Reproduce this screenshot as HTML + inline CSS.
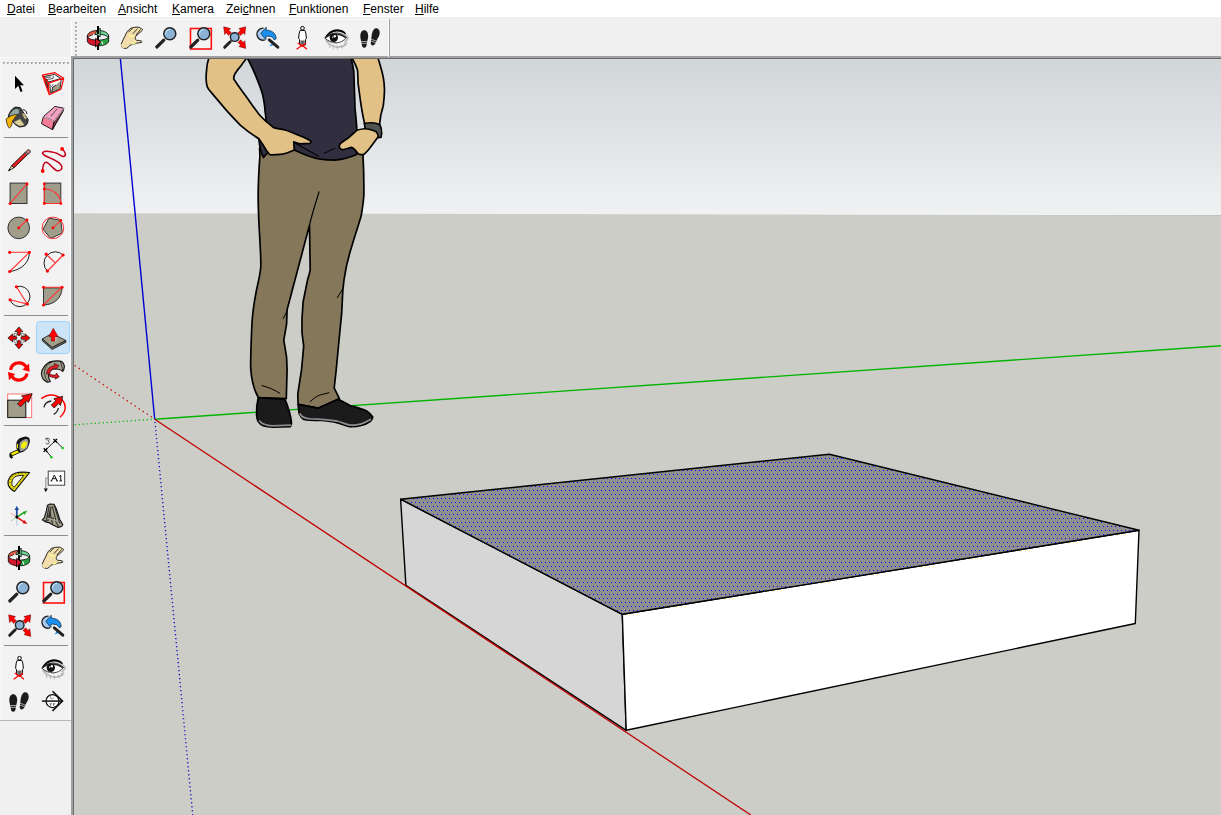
<!DOCTYPE html>
<html><head><meta charset="utf-8">
<style>
html,body{margin:0;padding:0;}
body{width:1221px;height:815px;overflow:hidden;background:#f0f0f0;position:relative;font-family:"Liberation Sans",sans-serif;}
#menu{position:absolute;left:0;top:0;width:1221px;height:17px;background:#fff;}
#menu span{position:absolute;top:2px;font-size:12px;line-height:14px;color:#000;white-space:nowrap;}
#menu u{text-decoration:underline;text-decoration-thickness:1px;text-underline-offset:1px;}
#ttb{position:absolute;left:71px;top:19px;width:317px;height:36px;background:#f2f2f2;border-top:1px solid #f8faff;border-left:1px solid #f8faff;}
#ttb .edge{position:absolute;left:316px;top:-1px;width:1px;height:38px;background:#a0a0a0;border-left:1px solid #fafafa;}
#ltb{position:absolute;left:0;top:57px;width:70px;height:663px;background:#f2f2f2;border-top:1px solid #f8faff;}
#ltb .bot{position:absolute;left:0;top:662px;width:71px;height:1px;background:#b9b9b9;}
#ltb .rgt{position:absolute;left:70px;top:0;width:1px;height:663px;background:#fbfbfb;}
.sep{position:absolute;left:4px;width:64px;height:1px;background:#8c8c8c;}
#vp{position:absolute;left:71px;top:56px;width:1150px;height:759px;background:#a0a0a0;}
svg{position:absolute;left:0;top:0;}
</style></head>
<body>
<div id="menu">
<span style="left:7px"><u>D</u>atei</span>
<span style="left:48px"><u>B</u>earbeiten</span>
<span style="left:118px"><u>A</u>nsicht</span>
<span style="left:172px"><u>K</u>amera</span>
<span style="left:226px">Zei<u>c</u>hnen</span>
<span style="left:289px"><u>F</u>unktionen</span>
<span style="left:363px"><u>F</u>enster</span>
<span style="left:415px"><u>H</u>ilfe</span>
</div>

<div id="vp"></div>

<svg id="scene" width="1221" height="815" viewBox="0 0 1221 815">
<defs>
<linearGradient id="sky" x1="0" y1="59" x2="0" y2="215" gradientUnits="userSpaceOnUse">
<stop offset="0" stop-color="#d1d6d9"/>
<stop offset="1" stop-color="#f0f1f2"/>
</linearGradient>
<pattern id="dots" x="0" y="0" width="4" height="8" patternUnits="userSpaceOnUse">
<rect x="0" y="0" width="4" height="8" fill="#8f8f8f"/>
<rect x="3" y="6" width="1" height="1" fill="#0000ff"/>
<rect x="1" y="2" width="1" height="1" fill="#0000ff"/>
</pattern>
<clipPath id="vpclip"><rect x="74" y="59" width="1147" height="756"/></clipPath>
</defs>
<rect x="71" y="56" width="1150" height="2" fill="#a0a0a0"/>
<rect x="71" y="56" width="2" height="759" fill="#a0a0a0"/>
<rect x="73" y="58" width="1148" height="1" fill="#696969"/>
<rect x="73" y="58" width="1" height="757" fill="#696969"/>
<g clip-path="url(#vpclip)">
<rect x="74" y="59" width="1147" height="156" fill="url(#sky)"/>
<polygon points="74,213.2 1221,215.3 1221,815 74,815" fill="#cdcdc8"/>
<!-- axes -->
<line x1="154.7" y1="419.2" x2="74" y2="365" stroke="#c80000" stroke-width="1.4" stroke-dasharray="1.2 3.62" stroke-dashoffset="-3.6"/>
<line x1="154.7" y1="419.2" x2="74" y2="424.8" stroke="#00b400" stroke-width="1.4" stroke-dasharray="1.1 2.91" stroke-dashoffset="-2.9"/>
<line x1="154.7" y1="419.2" x2="192.8" y2="815" stroke="#0000c8" stroke-width="1.4" stroke-dasharray="1.1 2.92" stroke-dashoffset="-2.9"/>
<line x1="154.7" y1="419.2" x2="120.4" y2="59" stroke="#0000d0" stroke-width="1.4"/>
<line x1="154.7" y1="419.2" x2="1221" y2="345.7" stroke="#00b400" stroke-width="1.4"/>
<!-- box -->
<g stroke="#000" stroke-width="1.4" stroke-linejoin="round">
<polygon points="400.6,499.2 622.3,614.3 626.2,730.3 405.9,585.4" fill="#d6d6d6"/>
<polygon points="622.3,614.3 1139,530.3 1135.3,623.5 626.2,730.3" fill="#ffffff"/>
<polygon points="400.6,499.2 829.4,454.2 1139,530.3 622.3,614.3" fill="url(#dots)"/>
</g>
<line x1="154.7" y1="419.2" x2="750.8" y2="815" stroke="#c00000" stroke-width="1.3"/>
<!-- person -->
<g id="person" stroke="#000" stroke-linejoin="round" stroke-linecap="round">
<!-- pants -->
<path d="M259.6,148 L259.9,156 C258.5,175 258,190 258.2,201.5 C258.5,220 259.5,232 259.9,241 C260.5,252 261,260 260.8,266.8 C260,276 258,283 256.5,290 C253.5,305 252,318 251.7,329 C251,345 250.5,358 250.7,368.4 C251.5,380 254,390 258.3,397.5 L286.3,398.6 L287.1,370 L286.6,357.3 L283.8,340.2 L286.6,324.2 L287.1,309.8 L309.5,225.1 L310.2,270.2 C309.5,274 308.5,277 307.5,280 L303.1,302 L302,318.6 L302,333 L303.7,346.2 L301.5,370 L297.8,393.9 L298.1,404.3 L318,408.2 L339.5,398.8 L334.2,388 L336.2,370 L339.5,335.2 L341.7,313.1 L342.8,291 L344,280 C346,265 349,255 351.8,246.2 C356,232 359,224 361.3,215.3 C363,205 364,198 363.9,193 C364,180 363.5,165 363,155.2 L362,148 Z" fill="#84775a" stroke-width="1.7"/>
<path d="M319,191.8 C316,202 312,214 309.5,225.1" fill="none" stroke-width="1.2"/>
<path d="M287.1,310.9 L283.2,318.6 M342.8,288.8 L337.3,297.7" fill="none" stroke-width="1"/>
<path d="M262.1,385.6 C268,387 275,390 279.8,393.3" fill="none" stroke-width="1"/>
<path d="M310.2,401.6 C314,398 318,395.5 320.2,395 L329,392.7" fill="none" stroke-width="1"/>
<!-- shoes -->
<path d="M258.3,397.7 C257,403 256.4,410 256.6,414.9 C256.8,418 257.5,420 258.3,421.5 C260,424 262,425.5 263.8,425.9 C267,426.8 270,427 272.6,427 L290.3,426.5 C291.3,425 291.5,424 291.4,422.6 C291,418 290,414 289.2,411.5 C287.8,407 286.5,402 284.8,399.4 Z" fill="#1b1b1b" stroke-width="1.8"/>
<path d="M259.5,421 C262,424.5 267,425.5 272.6,425.8 L290.6,425.2" fill="none" stroke="#8e8b90" stroke-width="1.8"/>
<path d="M298.1,404.3 C298.5,408 298.8,411 299.2,413.7 C300.5,416.5 302,418.5 303.6,419.3 C310,420.5 316,420.5 322.4,420.4 C328,421 332,421.5 336.8,422.6 C342,424 346,426 350,426.5 C354,426.8 358,426.2 361.1,425.4 C365,424.5 368,423 370,421.5 C371.5,420 372.5,418.5 372.7,417.1 C371,414.5 369,412.5 366.6,411 C361,408.5 355,407 350,405.5 C346,403.5 342,401 337.9,399.4 L318,408.2 Z" fill="#1b1b1b" stroke-width="1.8"/>
<path d="M300,414 C302,417.5 305,418.5 310,418.8 C318,419 328,419.5 336.8,421 C343,422.5 347,425 351,425.2 C357,425.5 364,423.5 370.5,419.5" fill="none" stroke="#8e8b90" stroke-width="1.8"/>
<!-- shirt -->
<path d="M246.5,50 L247.9,59 C251,65 254,71 256.4,77.4 C259,84 261.5,90 262.6,94.6 C264,101 264.8,106 265,110.5 L266.3,121.6 L262,132 L258.9,139.2 C259.5,146 260.5,152 263.5,157.5 L268.1,152.3 L280,140 L294.3,150 C299,152 304,154.5 309.4,156.2 C313,157.5 317,158.7 320.5,159.2 C325,159.8 330,160.2 335,160.1 C342,159.5 350,157.5 356.5,154.5 L356.9,130.2 C356.4,120 355.5,114 355,108.1 C354.8,100 354.6,95 354.4,89.7 C354.2,82 354,76 353.8,71.3 C353,66 352,62 351.3,59 L351,50 Z" fill="#312e3f" stroke-width="1.7"/>
<path d="M294.3,142.5 C302,147 310,151.5 318.6,156.2" fill="none" stroke-width="1.2"/>
<path d="M324.1,153.3 C328,151.5 331.5,150 335,148.3" fill="none" stroke-width="1"/>
<!-- left arm -->
<path d="M208,50 L208.6,59 C207.5,62 207,65 206.7,68.8 C206.3,72 206.1,75 206.1,78.6 C206.2,82 206.6,85 207.4,87.2 C208.5,89.5 209.8,91 211,92.1 C215,97 219.5,102 224.5,108.1 C229.5,114 235,119.5 240.5,125.3 C246,130 252,134.5 258.9,138.8 C260.5,141 262,143.5 263.5,145.7 C265,148.5 267,151.5 269,153.8 C269.8,154.5 270.5,154.9 271.4,154.9 C275,154.9 279,154.6 282.5,154.2 C286.5,153.2 290.5,151.8 294.3,150 C294.2,147 293.8,144 293.7,141.8 C296,142.6 298,143.4 300.2,143.8 C303.5,143.8 307,143.6 310,143.4 C310.8,142.8 311,141.8 310.7,141.1 C308,139.5 305,138 302.2,136.6 C297,134.5 291,132 285.9,130.2 C281,129.2 277,128.5 273.6,127.7 C271,125.5 268.5,123.5 266.3,121.6 C263.5,119 261,116.5 258.9,114.2 C255.5,109.5 252,105 249.1,100.7 C245,95 240.5,89 236.8,83.5 C235,81 233.8,79.5 233.7,78.6 C233.8,76.5 234.2,75 235,73.7 C236.8,71 238.5,68.5 240.5,66.4 C242.5,63.5 244.5,61 246,59 L248,50 Z" fill="#e2c186" stroke-width="1.7"/>
<!-- right arm -->
<path d="M352,50 L352.6,59 C354.5,62.5 356.2,66 357.5,70 C357.9,74 358,79 358.1,83.5 C359,90 359.8,96 360.6,102 C361.5,108 362.5,114 363.6,119.1 L364.8,124 L365.5,128.5 C362,129 359,129.5 356.9,130.2 C354,133 351,135.5 348.9,137.5 C345,140 342,142 340.3,143.7 C339.3,145 339.2,146.3 339.1,147.3 C340,148.8 341.5,149.6 342.8,149.8 C346,149 349,147.8 351.3,147.3 C353,148 354.2,149 355,149.8 C356.2,151.5 357.5,153 358.7,154.1 C360.5,154.6 362,154.8 363.6,154.7 C365.5,153 367,151.5 368.5,149.8 C372,145.5 375,141 377.7,137.5 L381.5,134 C381,128 380.2,126 379.6,124 C380,121 380.4,118 380.8,115.4 C381.8,111 382.7,108 383.3,105.6 C384,100 384.4,95 384.5,89.7 C384.3,85 384,81 383.3,77.4 C382,71 380.2,65 378.3,59 L377,50 Z" fill="#e2c186" stroke-width="1.7"/>
<path d="M364.2,123.6 C370,122.5 376,122.8 379.5,124.5 C381.5,127 382,132 381.2,137.2 L378.5,137.8 C378,134 376.5,131.5 374.7,131 C371,129.5 368,129 365.5,128.8 Z" fill="#4f5452" stroke-width="1.5"/>
</g>
</g>
</svg>

<div id="ttb"><div class="edge"></div></div>
<div id="ltb"><div class="rgt"></div><div style="position:absolute;left:0;top:0;width:1px;height:662px;background:#f4f7fc"></div><div class="bot"></div>
<div class="sep" style="top:79px"></div>
<div class="sep" style="top:257px"></div>
<div class="sep" style="top:367px"></div>
<div class="sep" style="top:477px"></div>
<div class="sep" style="top:587px"></div>
</div>
<svg id="icons" width="1221" height="815" viewBox="0 0 1221 815" style="position:absolute;left:0;top:0">
<defs>
<g id="i-orbit">
 <path d="M1.3,10.2 C1.6,6.8 5.5,4.8 11,4.5 L11,8.3 C7,8.5 3.8,9.3 2.6,10.8 Z" fill="#e25a48" stroke="#000" stroke-width="0.8"/>
 <path d="M22.7,10.2 C22.4,6.8 18.5,4.8 13,4.5 L13,8.3 C17,8.5 20.2,9.3 21.4,10.8 Z" fill="#6cd394" stroke="#000" stroke-width="0.8"/>
 <path d="M1.3,10.2 C1.8,12.6 5.5,13.8 10.6,14 L10.6,19.8 C5.5,19.5 1.6,17.6 1.3,15 Z" fill="#d4162c" stroke="#000" stroke-width="0.8"/>
 <path d="M22.7,10.2 C22.2,12.6 18.5,13.8 13.4,14 L13.4,19.8 C18.5,19.5 22.4,17.6 22.7,15 Z" fill="#27a23e" stroke="#000" stroke-width="0.8"/>
 <rect x="11" y="0" width="2" height="24" fill="#000"/>
 <path d="M9.6,12.2 L14.8,16.2 L9.4,21 Z" fill="#d4162c" stroke="#000" stroke-width="0.7" stroke-linejoin="round"/>
 <path d="M14.2,2 L9,7.5 L14.2,11 Z" fill="#6cd394" stroke="#000" stroke-width="0.7" stroke-linejoin="round"/>
 <path d="M15.6,15.5 L17,18.5 M8.2,7.8 L7,10" stroke="#fff" stroke-width="1.1"/>
 <rect x="11" y="0" width="2" height="8" fill="#000"/><rect x="11" y="20" width="2" height="4" fill="#000"/>
</g>
<g id="i-pan">
 <path d="M1.3,17.9 C1.5,20 1.8,21 2.4,21.6 C4,22.5 5.5,22.5 6.8,22.3 C8,21.5 9,20.2 10.1,19.3 C11.8,18.5 13.5,18.2 14.9,17.9 L16.8,17.1 C18.5,16.9 20,16.8 21.6,16.4 C22,16 21.8,15.2 21.2,14.9 C19.5,14.5 18,14.4 16.4,14.2 C15.8,13.8 15.3,13.3 15.3,12.7 C15.2,12 15.3,11.2 15.7,10.5 C16.6,9.5 17.6,8.5 18.6,7.6 C20,6.5 21.5,5.2 22.7,3.9 C22.5,3 21.3,2.3 20.1,2 L19.3,1.3 C17.8,1.1 16.2,1.1 14.6,1.3 C13,1.6 11.8,1.9 10.5,2.4 C9.2,3.3 8.1,4.5 7.2,5.7 C6.2,7.2 5.5,8.6 5,10.1 C3.6,12.7 2.3,15.3 1.3,17.9 Z" fill="#f2deaa" stroke="#111" stroke-width="0.9" stroke-linejoin="round"/>
 <path d="M1.5,18.2 C1.8,20.2 2.5,21.5 4,22" stroke="#f2deaa" stroke-width="1.4" fill="none"/>
 <path d="M8.6,6.2 L12.6,2.1 M12.8,7.8 L17.5,2.6 M15.8,9.2 L20.6,3.4" stroke="#222" stroke-width="0.9" fill="none"/>
 <path d="M8.5,9 C10,9.5 12,10 14,10.5 M11.8,18.2 C13,17.5 14.5,17.2 15.5,17.5" stroke="#f5f88a" stroke-width="1.6" fill="none" opacity="0.9"/>
</g>
<g id="i-zoom">
 <line x1="2.8" y1="21" x2="9.8" y2="14.2" stroke="#222" stroke-width="3.2" stroke-linecap="round"/>
 <circle cx="15.8" cy="7.7" r="6" fill="#8cb2d6" stroke="#222" stroke-width="1.5"/>
 <path d="M11.5,8.5 A4.5,4.5 0 0 1 16,3.3" stroke="#b8dcf8" stroke-width="1.2" fill="none"/>
</g>
<g id="i-zoomwin">
 <rect x="2.5" y="2.5" width="20.8" height="20.5" fill="none" stroke="#ff1010" stroke-width="1.6"/>
 <use href="#i-zoom"/>
</g>
<g id="i-zoomext">
 <line x1="2.7" y1="21.3" x2="8.2" y2="15.8" stroke="#222" stroke-width="3" stroke-linecap="round"/>
 <circle cx="12.7" cy="11.1" r="4.3" fill="#8cb2d6" stroke="#222" stroke-width="1.4"/>
 <path d="M1.7,0.8 L8.5,2.6 L6.8,4.2 L9.4,6.8 L6.8,9.4 L4.2,6.8 L2.6,8.5 Z" fill="#f00" stroke="#600" stroke-width="0.5"/>
 <path d="M23.7,0.8 L16.9,2.6 L18.6,4.2 L16,6.8 L18.6,9.4 L21.2,6.8 L22.8,8.5 Z" fill="#f00" stroke="#600" stroke-width="0.5"/>
 <path d="M23.7,22.4 L16.9,20.6 L18.6,19 L16,16.4 L18.6,13.8 L21.2,16.4 L22.8,14.7 Z" fill="#f00" stroke="#600" stroke-width="0.5"/>
</g>
<g id="i-prev">
 <path d="M7.5,2.2 A6,6 0 1 0 9,13.8" fill="#a8ccf0" stroke="#222" stroke-width="1.4"/>
 <path d="M4.8,7.4 L10.2,1.2 L10.4,4.2 C15,4.2 20,6.5 20.2,12.8 L18,13.8 C17,10.5 14,10 10.2,10.2 L9.8,13.6 Z" fill="#1a8ff0" stroke="#123" stroke-width="0.7" stroke-linejoin="round"/>
 <path d="M13.4,20.5 L16,17 L18,19 Z" fill="#1a8ff0"/>
 <line x1="13.3" y1="13.8" x2="21.8" y2="21.2" stroke="#222" stroke-width="3" stroke-linecap="round"/>
</g>
<g id="i-poscam">
 <circle cx="12.5" cy="2.2" r="1.8" fill="#fff" stroke="#000" stroke-width="1"/>
 <path d="M10.2,4.4 L14.8,4.4 C15.8,6 16.2,9 16.3,12.5 L15.5,13.5 L15.3,18.8 L13.5,19.4 L12.5,17 L11.5,19.4 L9.7,18.8 L9.5,13.5 L8.7,12.5 C8.8,9 9.2,6 10.2,4.4 Z" fill="#fff" stroke="#000" stroke-width="1" stroke-linejoin="round"/>
 <path d="M10.3,14.5 L14.7,14.5 L14.5,19 L10.5,19 Z" fill="#666"/>
 <path d="M6.6,23.2 L12.3,19.2 L16.9,23.2 M7.8,17 L12.3,20.3 L16,17" stroke="#f00" stroke-width="1.2" fill="none"/>
</g>
<g id="i-look">
 <path d="M2,15 C6,19.5 11,21.5 16,21 C19,20.5 21.5,19 23,16.5" stroke="#bbb" stroke-width="1.6" fill="none"/>
 <path d="M5,17.5 L6,22 M9,19 L9.5,23 M13,19.5 L13.5,23.5 M17,19 L18.5,22.5 M20,17 L22,20" stroke="#aaa" stroke-width="0.8" fill="none"/>
 <path d="M16,5.5 C19,6.5 22,8.5 24,12 C23,14 22,15 20.5,16" stroke="#b8b8b8" stroke-width="1.8" fill="none"/>
 <path d="M1,12.5 C4,8.5 8.5,6.8 13,7 C17,7.3 20,9 22.5,11.5 C19.5,15 16,16.8 12.5,16.8 C8,16.5 4.5,15 1,12.5 Z" fill="#fff" stroke="#333" stroke-width="0.9"/>
 <path d="M1,11.5 C3.5,6 9,3.2 13.5,3.3 C17.5,3.5 20.5,5 22,7.5 L21,8.3 C19,6.3 16,5.5 13,5.6 C8.5,5.8 4,8.5 1.6,12.6 Z" fill="#000"/>
 <path d="M1,12 C4,9.2 8,8 12,8 C16,8 19,9.5 22,11.8" stroke="#222" stroke-width="1.3" fill="none"/>
 <circle cx="9.8" cy="11.8" r="4.2" fill="#111"/>
 <circle cx="10.8" cy="10.3" r="1.2" fill="#fff"/>
 <circle cx="8.6" cy="11.2" r="0.6" fill="#fff"/>
 <path d="M2,14 C5,16 9,17 13,17" stroke="#777" stroke-width="0.8" fill="none"/>
</g>
<g id="i-walk">
 <path d="M6.2,4.3 C8.8,4.3 10.3,7 10.2,10.5 C10.1,13 9,15 8.8,17.5 C8.6,20.5 7.8,21.7 6.2,21.7 C4.6,21.7 3.9,20.5 3.7,17.5 C3.5,15 2.3,13 2.3,10.5 C2.3,7 3.6,4.3 6.2,4.3 Z" fill="#1c1c1c"/>
 <path d="M18.8,2.3 C21.3,2.8 22.2,5.5 21.5,8.5 C21,11 19.3,12.5 18.5,14.8 C17.6,17.8 16.3,19.7 14.5,19.4 C12.8,19 12.4,17.5 13,14.7 C13.5,12.2 13.4,10 14,7.5 C14.8,4 16.5,1.9 18.8,2.3 Z" fill="#1c1c1c"/>
 <path d="M3.5,15.5 L9.2,15.5 M3.6,17.3 L9,17.3 M13,13.2 L18.7,15.2 M12.7,15 L18,16.8" stroke="#ddd" stroke-width="0.7"/>
</g>
<g id="i-select">
 <path d="M8,3.8 L8,17 L11.3,13.8 L13.5,20 L15.5,19.3 L13.3,13.3 L17,13.2 Z" fill="#000"/>
</g>
<g id="i-component">
 <path d="M1.4,3.2 L13.8,0.7 L22.7,6.2 L20,17.2 L8.3,22.7 Z" fill="#fff"/>
 <polygon points="3,4.6 13.6,2.4 20,6.6 7.6,10" fill="#f4f4f4" stroke="#222" stroke-width="1"/>
 <polygon points="2.6,5.5 7,11.6 8.2,21 4.5,13" fill="#3a3a3a"/>
 <polygon points="11.5,15.5 19.8,8.8 18.8,16.8 9.8,20.8" fill="#a09e8a"/>
 <path d="M8.8,11.5 L9.6,21 L19,16.8 L20.2,8 M11.5,15.5 L11,20 M11.5,15.5 L15,13" stroke="#222" stroke-width="0.9" fill="none"/>
 <path d="M5,5.5 L10,5 M6,7.5 L12,6.5 L12.5,4 M12.5,12.5 L10.5,14 L12,16" stroke="#333" stroke-width="0.8" fill="none"/>
 <path d="M1.4,3.2 L13.8,0.7 L22.7,6.2 L20,17.2 L8.3,22.7 Z M1.4,3.2 L7.3,11.1 L22.7,6.2 M7.3,11.1 L8.3,22.7" fill="none" stroke="#f00" stroke-width="1.2" stroke-linejoin="round"/>
</g>
<g id="i-paint">
 <path d="M1.2,10.1 C3,5 6,1.5 9,1.1 L13.3,1.7 L21.2,13.7 C21,17 19.5,19.5 18,20 L12.8,21.1 C10,20 7.5,18 6,16.3 Z" fill="#444" stroke="#111" stroke-width="0.9"/>
 <path d="M2.5,9.5 C4,5.5 7,3 10,3 C12,3.2 12.5,5 11.8,7 C10,9.5 6,10.5 2.5,9.5 Z" fill="#8fa8a0"/>
 <path d="M7,16 L13,13 L17.5,19 L13,20 C11,19.5 9,18 7,16 Z" fill="#d8d098"/>
 <path d="M15,8 L17,7 L20,12 L18,13.5 Z" fill="#c0b080"/>
 <path d="M15.5,4 C17.5,3 19.5,5 20,8" stroke="#111" stroke-width="1" fill="none"/>
 <path d="M-0.9,13.2 C-0.5,17 0.8,20.5 2.3,22.1 C3.6,21.5 4.5,19.5 4.9,17.9 C5.3,15.8 5.5,14.5 6.5,13.7 C8,11.5 9.5,9.5 10.7,8.5 C7,8.5 4.5,9.5 2.8,10.6 C1.5,11.2 0,12 -0.9,13.2 Z" fill="#f5b400" stroke="#222" stroke-width="0.8"/>
</g>
<g id="i-eraser">
 <path d="M2.4,10.6 L13.9,0.4 L22.8,2.2 L13.1,15.3 Z" fill="#f4a0c4" stroke="#111" stroke-width="0.9" stroke-linejoin="round"/>
 <path d="M2.4,10.6 L13.1,15.3 L11.5,23.7 L0.5,17.7 Z" fill="#f27c98" stroke="#111" stroke-width="0.9" stroke-linejoin="round"/>
 <path d="M13.1,15.3 L22.8,2.2 L22,5.5 L11.5,23.7 Z" fill="#7a3a48" stroke="#111" stroke-width="0.9" stroke-linejoin="round"/>
 <path d="M2.4,10.6 L13.1,15.3 L22.8,2.2" stroke="#fde" stroke-width="0.8" fill="none"/>
 <path d="M10,10 L16,3" stroke="#553" stroke-width="1.2" stroke-dasharray="1 0.6"/>
</g>
<g id="i-pencil">
 <path d="M1.7,22.7 L4.73,17.5 L6.97,19.8 Z" fill="#e4e0a0" stroke="#111" stroke-width="0.8" stroke-linejoin="round"/>
 <path d="M1.7,22.7 L2.6,20.9 L3.5,21.8 Z" fill="#000" stroke="#000" stroke-width="0.6"/>
 <path d="M4.73,17.5 L17.91,4.66 L20.15,6.96 L6.97,19.8 Z" fill="#e81c1c" stroke="#111" stroke-width="0.9" stroke-linejoin="round"/>
 <path d="M17.91,4.66 L18.7,3.9 L20.94,6.2 L20.15,6.96 Z" fill="#fff" stroke="#111" stroke-width="0.6"/>
 <path d="M18.7,3.9 L20.3,2.3 C21,1.6 22.1,1.6 22.8,2.3 C23.5,3 23.5,4.1 22.8,4.8 L20.94,6.2 Z" fill="#d88484" stroke="#111" stroke-width="0.9"/>
</g>
<g id="i-freehand">
 <path d="M1.7,23 C1.5,18 3,14.3 5,14.3 C8,14.3 12,21 15.5,22.5 C18.5,23.5 21.5,21.5 20.8,18.5 C20,15 14,12 8,9.5 C3,7.5 0.5,5.5 2,4.2 C4,2.5 10,3.5 14.8,4.9 C18.5,6.3 20,8.7 22.5,8.5 C25,8 25.5,5 21.1,0.7" fill="none" stroke="#c4001c" stroke-width="1.5"/>
 <circle cx="1.7" cy="23" r="1.9" fill="#f00"/>
 <circle cx="21.1" cy="0.9" r="1.9" fill="#f00"/>
</g>
<g id="i-rect">
 <rect x="3.1" y="1.1" width="16.9" height="20.4" fill="#a09e8a" stroke="#333" stroke-width="1"/>
 <line x1="3.1" y1="21.5" x2="20" y2="1.9" stroke="#f33" stroke-width="1.1"/>
 <circle cx="3.1" cy="21.5" r="1.5" fill="#f00"/><circle cx="20" cy="1.9" r="1.5" fill="#f00"/>
</g>
<g id="i-rotrect">
 <rect x="3.3" y="1.1" width="16.5" height="20.4" fill="#a09e8a" stroke="#333" stroke-width="1"/>
 <path d="M3.3,1.9 L3.3,21.5 L19.8,21.5 M3.3,7 A16.5,14.5 0 0 1 19.8,21.5" fill="none" stroke="#f33" stroke-width="1.1"/>
 <circle cx="3.3" cy="1.9" r="1.4" fill="#f00"/><circle cx="3.3" cy="7" r="1.4" fill="#f00"/><circle cx="3.3" cy="21.5" r="1.4" fill="#f00"/><circle cx="19.8" cy="21.5" r="1.4" fill="#f00"/>
</g>
<g id="i-circle">
 <circle cx="11.7" cy="11.9" r="10.8" fill="#a09e8a" stroke="#333" stroke-width="1"/>
 <line x1="11.7" y1="11.9" x2="20" y2="4" stroke="#f33" stroke-width="1.1"/>
 <circle cx="11.7" cy="11.9" r="1.4" fill="#f00"/><circle cx="20" cy="4" r="1.4" fill="#f00"/>
</g>
<g id="i-polygon">
 <polygon points="19.8,4.4 21.3,17 9.6,22.5 2.1,13.1 8,2.1" fill="#a09e8a" stroke="#333" stroke-width="1"/>
 <circle cx="11.9" cy="11.9" r="10.8" fill="none" stroke="#f33" stroke-width="1"/>
 <line x1="11.9" y1="11.9" x2="19.8" y2="4.4" stroke="#f33" stroke-width="1.1"/>
 <circle cx="11.9" cy="11.9" r="1.4" fill="#f00"/><circle cx="19.8" cy="4.4" r="1.4" fill="#f00"/>
</g>
<g id="i-arc1">
 <path d="M22.4,2.3 C22.5,12 15,20 2.7,21.5" fill="none" stroke="#222" stroke-width="1"/>
 <path d="M2.7,2.3 L22.4,2.3 L2.7,21.5" fill="none" stroke="#f33" stroke-width="1.1"/>
 <circle cx="2.7" cy="2.3" r="1.6" fill="#f00"/><circle cx="22.4" cy="2.3" r="1.6" fill="#f00"/><circle cx="2.7" cy="21.5" r="1.6" fill="#f00"/>
</g>
<g id="i-arc2">
 <path d="M6.4,21.1 A11.2,11.2 0 1 1 22.1,5" fill="none" stroke="#222" stroke-width="1"/>
 <path d="M22.1,5 L6.4,21.1 M5.2,4.2 L14.3,12.9" fill="none" stroke="#f33" stroke-width="1.3"/>
 <circle cx="5.2" cy="4.2" r="1.6" fill="#f00"/><circle cx="22.1" cy="5" r="1.6" fill="#f00"/><circle cx="6.4" cy="21.1" r="1.6" fill="#f00"/>
</g>
<g id="i-arc3">
 <path d="M9.4,2.8 A10.2,10.2 0 1 1 3.1,15.8" fill="none" stroke="#222" stroke-width="1"/>
 <path d="M9.4,2.8 L20.4,20.1 L3.1,15.8" fill="none" stroke="#f33" stroke-width="1.1"/>
 <circle cx="9.4" cy="2.8" r="1.6" fill="#f00"/><circle cx="3.1" cy="15.8" r="1.6" fill="#f00"/><circle cx="20.4" cy="20.1" r="1.6" fill="#f00"/>
</g>
<g id="i-pie">
 <path d="M2.5,3.9 L21,3.9 C21,14 13,20.9 2.5,20.9 Z" fill="#a09e8a" stroke="#333" stroke-width="1"/>
 <path d="M2.5,3.2 L21,3.2 L2.5,20.9" fill="none" stroke="#f33" stroke-width="1.1"/>
 <circle cx="2.5" cy="3.2" r="1.5" fill="#f00"/><circle cx="21" cy="3.2" r="1.5" fill="#f00"/><circle cx="2.5" cy="20.9" r="1.5" fill="#f00"/>
</g>
<g id="i-move">
 <g fill="#f40000" stroke="#1a1a1a" stroke-width="0.75" stroke-linejoin="miter">
 <path d="M11.9,0.9 L15.9,5.7 L13.3,5.7 L13.3,9 Q11.95,10.3 10.6,9 L10.6,5.7 L7.9,5.7 Z"/>
 <path d="M11.9,22.9 L15.9,18.1 L13.3,18.1 L13.3,14.8 Q11.95,13.5 10.6,14.8 L10.6,18.1 L7.9,18.1 Z"/>
 <path d="M0.9,11.9 L5.9,7.8 L5.9,10.5 L9.3,10.5 Q10.6,11.9 9.3,13.3 L5.9,13.3 L5.9,16 Z"/>
 <path d="M22.9,11.9 L17.9,7.8 L17.9,10.5 L14.5,10.5 Q13.2,11.9 14.5,13.3 L17.9,13.3 L17.9,16 Z"/>
 </g>
 <g fill="#fff" stroke="#555" stroke-width="0.5">
 <rect x="7.3" y="7.4" width="2.4" height="2.4"/><rect x="14.2" y="7.4" width="2.4" height="2.4"/>
 <rect x="7.3" y="14" width="2.4" height="2.4"/><rect x="14.2" y="14" width="2.4" height="2.4"/>
 </g>
 <circle cx="11.95" cy="11.9" r="1.1" fill="#fff"/>
</g>
<g id="i-pushpull">
 <polygon points="1.3,12.9 11,7.5 24.9,14.5 11.1,21.5" fill="#a09e8a" stroke="#222" stroke-width="0.9" stroke-linejoin="round"/>
 <polygon points="1.3,12.9 11.1,21.5 24.9,14.5 24.9,16.3 11.1,23.5 1.3,14.7" fill="#6c6a5c" stroke="#222" stroke-width="0.9" stroke-linejoin="round"/>
 <path d="M12.3,2.3 L17,10.5 L14.3,10.5 L14.3,15 L10.3,15 L10.3,10.5 L7.9,10.5 Z" fill="#f00" stroke="#600" stroke-width="0.5"/>
 <path d="M14.8,11 L14.8,15.5" stroke="#ddd" stroke-width="1"/>
</g>
<g id="i-rotate">
 <path d="M3.5,9.8 C4.5,5 8,2.8 12.1,2.8 C15.5,2.8 18,4.5 19.5,7.5" fill="none" stroke="#f00" stroke-width="3.2"/>
 <path d="M22.6,11.8 L15.5,9.8 L22,3.5 Z" fill="#f00"/>
 <path d="M20,13.5 C19.5,17.5 16,20.2 12.1,20.2 C8.5,20.2 6,18.5 4.5,15.8" fill="none" stroke="#f00" stroke-width="3.2"/>
 <path d="M1,12 L8.2,14 L2,20.3 Z" fill="#f00"/>
</g>
<g id="i-followme">
 <path d="M0.4,13.8 C0.5,9 5,2.5 11.1,1.4 C14,0.8 17,0.8 19.3,1.1 C21.5,1.8 23,3.5 23.4,6.6 C23.2,9 22.5,10.5 21.7,11.4 C20,10.2 18.8,9.5 17.2,9.3 C15,9 13,9 11.7,9.3 C9.8,10 8.7,11 8.3,12.4 C7.8,14 7.5,15.5 7.6,17.2 C8,19 8.8,20.5 9.3,21.4 C8,22 7,22.3 5.9,22.1 C4,21.3 2.8,20 1.8,18.6 C1,17 0.5,15.5 0.4,13.8 Z" fill="#a09e8a" stroke="#111" stroke-width="1.1"/>
 <path d="M11,2 C7,3.5 4,7 3.5,11.5 C3.2,15 4.5,19 7,21.5" stroke="#222" stroke-width="0.8" fill="none"/>
 <path d="M19.5,1.5 C20.5,4 21.2,8 21.7,11.4" stroke="#222" stroke-width="0.8" fill="none"/>
 <path d="M5.6,14 C5.6,9.5 8.5,6.3 13.8,5.6 L13.2,3.6 L18,5.6 L14.6,9.4 L14.3,8.1 C11,8.5 9.2,10.7 8.6,14 Z" fill="#e41e26" stroke="#300" stroke-width="0.6" stroke-linejoin="round"/>
 <path d="M8.2,14 C10.5,15 12.5,15.3 14.8,15 L15.4,13 L18.3,16.8 L14.2,19.2 L14.3,17.6 C12,17.6 9.8,17 8.3,16.3 Z" fill="#e41e26" stroke="#300" stroke-width="0.6" stroke-linejoin="round"/>
</g>
<g id="i-scale">
 <rect x="0.7" y="0" width="24" height="23.5" fill="#fff" stroke="#f66" stroke-width="0.9"/>
 <rect x="0.7" y="6.2" width="18.1" height="17.3" fill="#a09e8a" stroke="#222" stroke-width="1.1"/>
 <path d="M25.1,-0.3 L21.5,8.5 L19.5,6.8 L13.5,12.8 L10.5,9.8 L16.5,3.8 L14.5,2 Z" fill="#f00" stroke="#111" stroke-width="0.8" stroke-linejoin="round"/>
</g>
<g id="i-offset">
 <path d="M0.3,4.6 C4,1.5 9,0.5 13,1.2 C20,2.5 24.5,8.5 24.2,14 C24,17.5 22,20.5 19,23.2" fill="none" stroke="#f00" stroke-width="1.4"/>
 <path d="M2.9,13.3 C3.5,10 6.5,7.5 10.3,7" fill="none" stroke="#222" stroke-width="1.3"/>
 <path d="M12.7,20.4 C15,19 17,16.5 17.4,14" fill="none" stroke="#222" stroke-width="1.3"/>
 <path d="M21.7,2.3 L19.5,11.5 L17.6,9.6 L13.2,14 L10.3,11.1 L14.7,6.7 L12.8,4.8 Z" fill="#f00" stroke="#111" stroke-width="0.8" stroke-linejoin="round"/>
</g>
<g id="i-tape">
 <path d="M3,17.2 L12,13.2 L13.2,16.2 L4.2,20.2 Z" fill="#f5ee00" stroke="#111" stroke-width="0.9"/>
 <path d="M2.3,18 L4.2,17.3 L6,21.8 L4.3,22.7 L2.5,21 Z" fill="#111"/>
 <path d="M9.3,6.9 C10,4.8 11,3.3 12.4,2.5 C14.5,1.3 16.5,0.6 18.6,0.4 C20,0.6 21.4,1.2 22.1,2.1 C22.8,3.6 23,5 22.7,6.6 C22.2,8.8 21.4,10.7 20.3,12.4 C18.5,14.3 16.5,15.8 14.2,16.6 C13,16.6 12,16.2 11.1,15.5 C10.2,14.3 9.6,13 9.3,11.7 Z" fill="#111"/>
 <path d="M12.8,6.6 C14.8,4.6 17,3.3 19.6,2.8 C20.6,3.3 21.2,4 21.4,4.9 C21.3,7.5 20.9,9.8 20,11.7 C18.2,13.6 16,14.9 13.5,15.5 C12.9,14.5 12.5,13.5 12.4,12.4 C12.4,10.4 12.5,8.5 12.8,6.6 Z" fill="#9c9c9c"/>
 <ellipse cx="17" cy="8.9" rx="2.5" ry="3.9" transform="rotate(28 17 8.9)" fill="#f5ee00"/>
 <path d="M10.8,8 C10.2,9.5 10.2,11 10.8,12.2" stroke="#f5ee00" stroke-width="1.2" fill="none"/>
</g>
<g id="i-dim">
 <path d="M4.5,14.1 L14.3,4.7 M14.3,4.7 L21.7,12.1 M4.5,14.1 L10.5,21" stroke="#000" stroke-width="0.9" fill="none"/>
 <path d="M2.7,12.3 L6.3,15.9 M2.7,15.9 L6.3,12.3 M12.5,2.9 L16.1,6.5 M12.5,6.5 L16.1,2.9" stroke="#000" stroke-width="1.3"/>
 <circle cx="21.7" cy="12.1" r="1.3" fill="#2c2"/>
 <circle cx="10.5" cy="21.2" r="1.3" fill="#2c2"/>
 <path d="M6,2.3 C7.5,1.8 9,2.8 8.2,4.2 C7.6,5 6.8,5 6.8,5 C8.3,5.3 8.8,7 7.5,7.8 C6.3,8.3 5,7.6 4.6,6.8 M4,3 L6.2,2.2 L5.8,4.3" stroke="#333" stroke-width="0.8" fill="none"/>
</g>
<g id="i-protractor">
 <path d="M1.1,14.1 C0.5,9 4,4.5 8,3.2 C12,2 17,2 22.6,2.5 L7.4,21.5 C4,19.5 1.5,17 1.1,14.1 Z" fill="#e8dc10" stroke="#111" stroke-width="1.2" stroke-linejoin="round"/>
 <path d="M4.8,13.6 C4.6,10 6.8,6.8 9.8,6 C12,5.4 14,5.3 16.8,5.4 L7.3,17.2 C5.8,16.2 4.9,15 4.8,13.6 Z" fill="#f2f2f2" stroke="#111" stroke-width="0.9"/>
 <path d="M2.5,12.5 L3.6,12.3 M3,9 L4.2,9.4 M5,6 L5.8,6.8 M8,4.2 L8.5,5.2 M11.5,3.3 L11.7,4.4 M15,3 L15,4.1 M18.5,3 L18.3,4 M20,5.5 L18.9,5.2 M17.5,8.5 L16.5,8.2 M14.5,12 L13.5,11.7 M11.5,15.8 L10.5,15.5 M3.5,16 L4.5,15.3 M6,18.8 L6.5,17.9" stroke="#222" stroke-width="0.7"/>
</g>
<g id="i-text">
 <rect x="7.2" y="1.1" width="16.5" height="14.1" fill="#fff" stroke="#333" stroke-width="0.9"/>
 <path d="M10.3,10.9 L13.3,5.2 L16.2,10.9 M11.6,8.7 L15,8.7 M9.6,10.9 L11.4,10.9 M15.2,10.9 L17,10.9 M18.3,6.5 L19.8,5.3 L19.8,10.9 M18.4,10.9 L21.1,10.9" stroke="#111" stroke-width="1" fill="none"/>
 <path d="M7.2,8.2 L4.8,8.2 L4.8,19" stroke="#999" stroke-width="1.2" fill="none"/>
 <path d="M2.8,18.5 L6.8,18.5 L4.8,22.3 Z" fill="#111"/>
</g>
<g id="i-axes">
 <line x1="9.8" y1="13.1" x2="9.8" y2="21.7" stroke="#c8d8e8" stroke-width="1.6"/>
 <line x1="9.8" y1="13.1" x2="3.1" y2="17.4" stroke="#6c6" stroke-width="1" stroke-dasharray="1 1"/>
 <line x1="9.8" y1="13.1" x2="3.1" y2="8.7" stroke="#e66" stroke-width="1" stroke-dasharray="1 1"/>
 <line x1="9.8" y1="13.1" x2="9.8" y2="5" stroke="#1c4c9c" stroke-width="1.8"/>
 <path d="M9.8,1.7 L12,6 L7.6,6 Z" fill="#1c4c9c"/>
 <line x1="9.8" y1="13.1" x2="17" y2="8.5" stroke="#2a2" stroke-width="1.5"/>
 <path d="M20.4,6.4 L17.5,11 L15.6,8 Z" fill="#2a2"/>
 <line x1="9.8" y1="13.1" x2="17" y2="17.8" stroke="#d11" stroke-width="1.5"/>
 <path d="M20.4,20.1 L15.6,19.2 L17.5,16 Z" fill="#d11"/>
 <circle cx="9.8" cy="13.1" r="1.5" fill="#000"/>
</g>
<g id="i-3dtext">
 <path d="M6.5,1.2 L8.8,0.1 L13,0.3 L15.2,4.5 L18.8,15.5 L21.8,20.6 L20.6,22.5 L17.2,23.4 L12.5,21.2 L10.2,20 L7.8,18.6 L4,17.6 L1.3,15.9 L3.2,13.8 L5.2,7.5 Z" fill="#a09e8a" stroke="#111" stroke-width="1.1" stroke-linejoin="round"/>
 <path d="M8.2,2 L5.5,15.5 M10,2.8 L8.2,13.5 M11.2,2.2 L14.8,15.8 M13.2,1.2 L18.8,19.5 M6,12.5 L13,14.5 M10.8,16 L11.5,21 M14.5,17 L17.5,22.5 M3.5,16.5 L8,16" stroke="#1a1a1a" stroke-width="0.9" fill="none"/>
 <path d="M9,5 L7.2,12 L10.5,12.8 Z" fill="#2a2a2a"/>
</g>
<g id="i-section">
 <circle cx="11.5" cy="11.1" r="6.5" fill="#fff" stroke="#111" stroke-width="1.2"/>
 <line x1="0.9" y1="11.1" x2="22" y2="11.1" stroke="#111" stroke-width="1.5"/>
 <path d="M11.5,1.2 L21.5,11.1 L11.5,20.9" fill="none" stroke="#111" stroke-width="1.6"/>
 <path d="M10,6 C9,6.5 9,8.5 10.5,8.8 C11.5,9 12.5,8.5 12.5,7.8 M9,13 L9.5,15.5 L10.5,13 M12.5,13 L12.5,15.5 L14,13" stroke="#333" stroke-width="0.6" fill="none"/>
</g>
</defs>
<rect x="36.5" y="321.5" width="33" height="32" rx="3" fill="#cce4f7" stroke="#99d1ff" stroke-width="1"/>
<rect x="75" y="22" width="2" height="2" fill="#a4a4a4"/><rect x="76" y="23" width="1" height="1" fill="#d0d0d0"/>
<rect x="75" y="26" width="2" height="2" fill="#a4a4a4"/><rect x="76" y="27" width="1" height="1" fill="#d0d0d0"/>
<rect x="75" y="30" width="2" height="2" fill="#a4a4a4"/><rect x="76" y="31" width="1" height="1" fill="#d0d0d0"/>
<rect x="75" y="34" width="2" height="2" fill="#a4a4a4"/><rect x="76" y="35" width="1" height="1" fill="#d0d0d0"/>
<rect x="75" y="38" width="2" height="2" fill="#a4a4a4"/><rect x="76" y="39" width="1" height="1" fill="#d0d0d0"/>
<rect x="75" y="42" width="2" height="2" fill="#a4a4a4"/><rect x="76" y="43" width="1" height="1" fill="#d0d0d0"/>
<rect x="75" y="46" width="2" height="2" fill="#a4a4a4"/><rect x="76" y="47" width="1" height="1" fill="#d0d0d0"/>
<rect x="75" y="50" width="2" height="2" fill="#a4a4a4"/><rect x="76" y="51" width="1" height="1" fill="#d0d0d0"/>
<rect x="75" y="54" width="2" height="2" fill="#a4a4a4"/><rect x="76" y="55" width="1" height="1" fill="#d0d0d0"/>
<rect x="3" y="62" width="2" height="2" fill="#a4a4a4"/><rect x="4" y="63" width="1" height="1" fill="#d0d0d0"/>
<rect x="7" y="62" width="2" height="2" fill="#a4a4a4"/><rect x="8" y="63" width="1" height="1" fill="#d0d0d0"/>
<rect x="11" y="62" width="2" height="2" fill="#a4a4a4"/><rect x="12" y="63" width="1" height="1" fill="#d0d0d0"/>
<rect x="15" y="62" width="2" height="2" fill="#a4a4a4"/><rect x="16" y="63" width="1" height="1" fill="#d0d0d0"/>
<rect x="19" y="62" width="2" height="2" fill="#a4a4a4"/><rect x="20" y="63" width="1" height="1" fill="#d0d0d0"/>
<rect x="23" y="62" width="2" height="2" fill="#a4a4a4"/><rect x="24" y="63" width="1" height="1" fill="#d0d0d0"/>
<rect x="27" y="62" width="2" height="2" fill="#a4a4a4"/><rect x="28" y="63" width="1" height="1" fill="#d0d0d0"/>
<rect x="31" y="62" width="2" height="2" fill="#a4a4a4"/><rect x="32" y="63" width="1" height="1" fill="#d0d0d0"/>
<rect x="35" y="62" width="2" height="2" fill="#a4a4a4"/><rect x="36" y="63" width="1" height="1" fill="#d0d0d0"/>
<rect x="39" y="62" width="2" height="2" fill="#a4a4a4"/><rect x="40" y="63" width="1" height="1" fill="#d0d0d0"/>
<rect x="43" y="62" width="2" height="2" fill="#a4a4a4"/><rect x="44" y="63" width="1" height="1" fill="#d0d0d0"/>
<rect x="47" y="62" width="2" height="2" fill="#a4a4a4"/><rect x="48" y="63" width="1" height="1" fill="#d0d0d0"/>
<rect x="51" y="62" width="2" height="2" fill="#a4a4a4"/><rect x="52" y="63" width="1" height="1" fill="#d0d0d0"/>
<rect x="55" y="62" width="2" height="2" fill="#a4a4a4"/><rect x="56" y="63" width="1" height="1" fill="#d0d0d0"/>
<rect x="59" y="62" width="2" height="2" fill="#a4a4a4"/><rect x="60" y="63" width="1" height="1" fill="#d0d0d0"/>
<rect x="63" y="62" width="2" height="2" fill="#a4a4a4"/><rect x="64" y="63" width="1" height="1" fill="#d0d0d0"/>
<rect x="67" y="62" width="2" height="2" fill="#a4a4a4"/><rect x="68" y="63" width="1" height="1" fill="#d0d0d0"/>
<use href="#i-orbit" transform="translate(86,26)"/>
<use href="#i-pan" transform="translate(120,26)"/>
<use href="#i-zoom" transform="translate(154,26)"/>
<use href="#i-zoomwin" transform="translate(188,26)"/>
<use href="#i-zoomext" transform="translate(222,26)"/>
<use href="#i-prev" transform="translate(256,26)"/>
<use href="#i-poscam" transform="translate(290,26)"/>
<use href="#i-look" transform="translate(324,26)"/>
<use href="#i-walk" transform="translate(358,26)"/>
<use href="#i-select" transform="translate(7,72)"/>
<use href="#i-component" transform="translate(41,72)"/>
<use href="#i-paint" transform="translate(7,106)"/>
<use href="#i-eraser" transform="translate(41,106)"/>
<use href="#i-pencil" transform="translate(7,148)"/>
<use href="#i-freehand" transform="translate(41,148)"/>
<use href="#i-rect" transform="translate(7,182)"/>
<use href="#i-rotrect" transform="translate(41,182)"/>
<use href="#i-circle" transform="translate(7,216)"/>
<use href="#i-polygon" transform="translate(41,216)"/>
<use href="#i-arc1" transform="translate(7,250)"/>
<use href="#i-arc2" transform="translate(41,250)"/>
<use href="#i-arc3" transform="translate(7,284)"/>
<use href="#i-pie" transform="translate(41,284)"/>
<use href="#i-move" transform="translate(7,326)"/>
<use href="#i-pushpull" transform="translate(41,326)"/>
<use href="#i-rotate" transform="translate(7,360)"/>
<use href="#i-followme" transform="translate(41,360)"/>
<use href="#i-scale" transform="translate(7,394)"/>
<use href="#i-offset" transform="translate(41,394)"/>
<use href="#i-tape" transform="translate(7,436)"/>
<use href="#i-dim" transform="translate(41,436)"/>
<use href="#i-protractor" transform="translate(7,470)"/>
<use href="#i-text" transform="translate(41,470)"/>
<use href="#i-axes" transform="translate(7,504)"/>
<use href="#i-3dtext" transform="translate(41,504)"/>
<use href="#i-orbit" transform="translate(7,546)"/>
<use href="#i-pan" transform="translate(41,546)"/>
<use href="#i-zoom" transform="translate(7,580)"/>
<use href="#i-zoomwin" transform="translate(41,580)"/>
<use href="#i-zoomext" transform="translate(7,614)"/>
<use href="#i-prev" transform="translate(41,614)"/>
<use href="#i-poscam" transform="translate(7,656)"/>
<use href="#i-look" transform="translate(41,656)"/>
<use href="#i-walk" transform="translate(7,690)"/>
<use href="#i-section" transform="translate(41,690)"/>
</svg>
</body></html>
